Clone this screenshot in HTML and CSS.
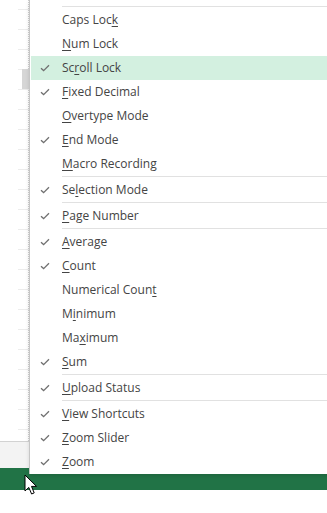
FILE: index.html
```html
<!DOCTYPE html>
<html>
<head>
<meta charset="utf-8">
<link rel="stylesheet" href="styles.css">
</head>
<body>
<div class="screen">
  <div class="sheet">
    <div class="cells"><div class="thumb"></div></div>
    <div class="tabs"></div>
  </div>
  <div class="statusbar"></div>
  <div class="below"></div>

  <div class="menu">
    <div class="sep"></div>
    <div class="item"><span class="chk"></span><span class="lbl">Caps Loc<u>k</u></span></div>
    <div class="item"><span class="chk"></span><span class="lbl"><u>N</u>um Lock</span></div>
    <div class="item hl"><span class="chk"><svg viewBox="0 0 10 8"><path d="M1 4.2 L3.6 6.6 L9 1.2"/></svg></span><span class="lbl">Sc<u>r</u>oll Lock</span></div>
    <div class="item"><span class="chk"><svg viewBox="0 0 10 8"><path d="M1 4.2 L3.6 6.6 L9 1.2"/></svg></span><span class="lbl"><u>F</u>ixed Decimal</span></div>
    <div class="item"><span class="chk"></span><span class="lbl"><u>O</u>vertype Mode</span></div>
    <div class="item"><span class="chk"><svg viewBox="0 0 10 8"><path d="M1 4.2 L3.6 6.6 L9 1.2"/></svg></span><span class="lbl"><u>E</u>nd Mode</span></div>
    <div class="item"><span class="chk"></span><span class="lbl"><u>M</u>acro Recording</span></div>
    <div class="sep"></div>
    <div class="item"><span class="chk"><svg viewBox="0 0 10 8"><path d="M1 4.2 L3.6 6.6 L9 1.2"/></svg></span><span class="lbl">Se<u>l</u>ection Mode</span></div>
    <div class="sep"></div>
    <div class="item"><span class="chk"><svg viewBox="0 0 10 8"><path d="M1 4.2 L3.6 6.6 L9 1.2"/></svg></span><span class="lbl"><u>P</u>age Number</span></div>
    <div class="sep"></div>
    <div class="item"><span class="chk"><svg viewBox="0 0 10 8"><path d="M1 4.2 L3.6 6.6 L9 1.2"/></svg></span><span class="lbl"><u>A</u>verage</span></div>
    <div class="item"><span class="chk"><svg viewBox="0 0 10 8"><path d="M1 4.2 L3.6 6.6 L9 1.2"/></svg></span><span class="lbl"><u>C</u>ount</span></div>
    <div class="item"><span class="chk"></span><span class="lbl">Numerical Coun<u>t</u></span></div>
    <div class="item"><span class="chk"></span><span class="lbl">M<u>i</u>nimum</span></div>
    <div class="item"><span class="chk"></span><span class="lbl">Ma<u>x</u>imum</span></div>
    <div class="item"><span class="chk"><svg viewBox="0 0 10 8"><path d="M1 4.2 L3.6 6.6 L9 1.2"/></svg></span><span class="lbl"><u>S</u>um</span></div>
    <div class="sep"></div>
    <div class="item"><span class="chk"><svg viewBox="0 0 10 8"><path d="M1 4.2 L3.6 6.6 L9 1.2"/></svg></span><span class="lbl"><u>U</u>pload Status</span></div>
    <div class="sep"></div>
    <div class="item"><span class="chk"><svg viewBox="0 0 10 8"><path d="M1 4.2 L3.6 6.6 L9 1.2"/></svg></span><span class="lbl"><u>V</u>iew Shortcuts</span></div>
    <div class="item"><span class="chk"><svg viewBox="0 0 10 8"><path d="M1 4.2 L3.6 6.6 L9 1.2"/></svg></span><span class="lbl"><u>Z</u>oom Slider</span></div>
    <div class="item"><span class="chk"><svg viewBox="0 0 10 8"><path d="M1 4.2 L3.6 6.6 L9 1.2"/></svg></span><span class="lbl"><u>Z</u>oom</span></div>
  </div>

  <svg class="cursor" viewBox="0 0 14 22"><path d="M1 1 L1 17 L4.8 13.4 L7.6 20 L10.2 18.9 L7.5 12.4 L12.5 12.4 Z"/></svg>
</div>
</body>
</html>
```

FILE: styles.css
```css
* { box-sizing: border-box; }
html, body { margin: 0; padding: 0; background: #ffffff; }
body { font-family: "Open Sans", "Noto Sans", sans-serif; }

.screen {
  position: relative;
  width: 327px;
  height: 513px;
  overflow: hidden;
  display: flex;
  flex-direction: column;
}

.sheet {
  height: 468px;
  display: flex;
  flex-direction: column;
}
.cells {
  position: relative;
  height: 441px;
  background:
    repeating-linear-gradient(to bottom, transparent 0, transparent 9px, #ececec 9px, #ececec 10px, transparent 10px, transparent 20px) 18px 0 / 11px 100% no-repeat,
    #ffffff;
  border-right: 1px dotted #cfcfcf;
  width: 29px;
}
.thumb {
  position: absolute;
  left: 22px;
  top: 69px;
  width: 7px;
  height: 20px;
  background: #d6d6d6;
}
.tabs {
  flex: 1;
  background: #f3f3f3;
  border-top: 1px solid #d2d2d2;
}
.statusbar {
  height: 22px;
  background: #217346;
}
.below {
  flex: 1;
  background: #ffffff;
}

.menu {
  position: absolute;
  left: 29px;
  top: 0;
  width: 310px;
  height: 474px;
  background: #ffffff;
  border-left: 1px solid #c6c6c6;
  padding: 6px 0 0 1px;
  box-shadow: 0 2px 4px rgba(0,0,0,0.12);
  font-size: 12px;
  color: #444444;
}
.sep {
  height: 2px;
  margin-left: 31px;
  border-top: 1px solid #e1e1e1;
}
.item {
  height: 24px;
  display: flex;
  align-items: center;
}
.item.hl { background: #d3f0e0; }
.chk {
  width: 27px;
  height: 24px;
  display: flex;
  align-items: center;
  justify-content: center;
  padding-left: 1px;
}
.chk svg {
  width: 10px;
  height: 8px;
  fill: none;
  stroke: #707070;
  stroke-width: 1.3;
}
.lbl {
  padding-left: 4px;
  white-space: nowrap;
  line-height: 24px;
}
.lbl u { text-underline-offset: 2px; text-decoration-thickness: 1px; }

.cursor {
  position: absolute;
  left: 24px;
  top: 474px;
  width: 14px;
  height: 22px;
}
.cursor path {
  fill: #ffffff;
  stroke: #000000;
  stroke-width: 1;
  stroke-linejoin: miter;
}
```
